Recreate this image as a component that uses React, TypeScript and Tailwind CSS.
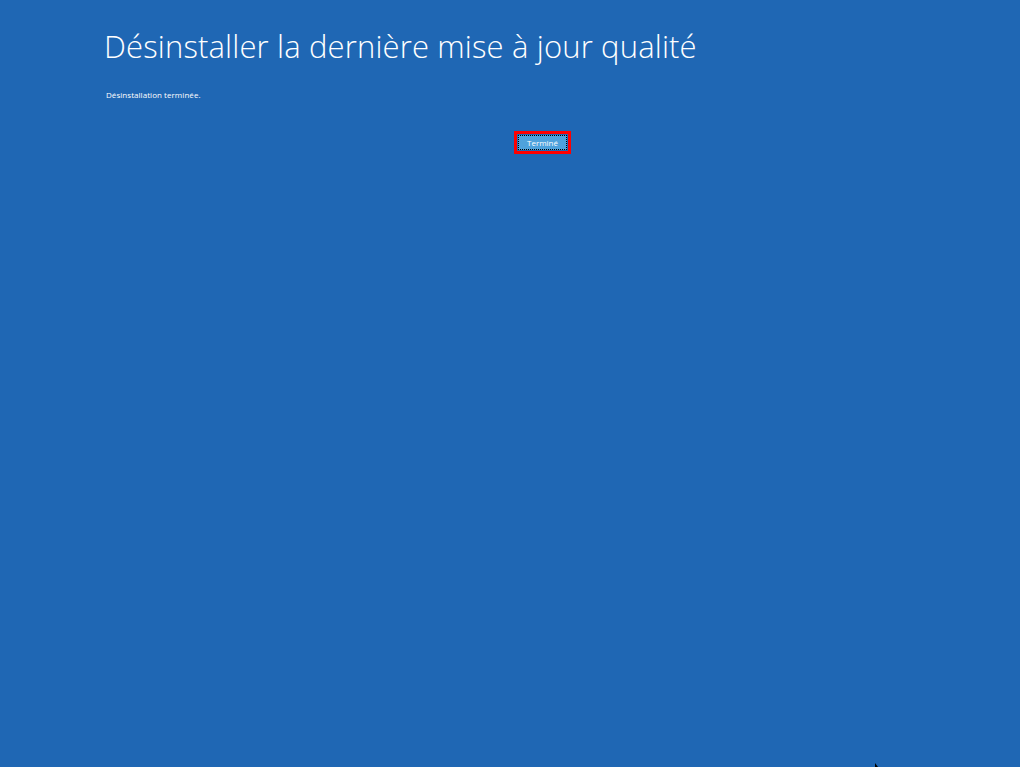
import React from "react";

export default function App() {
  return (
    <div className="w-[1020px] h-[767px] bg-[#1f67b4] overflow-hidden relative text-white" style={{ fontFamily: '"Open Sans", "Noto Sans", sans-serif' }}>
      <div className="pl-[104px] pt-[26px]">
        <h1 className="text-[31px] leading-[40px] font-light tracking-[0.15px]">Désinstaller la dernière mise à jour qualité</h1>
        <p className="mt-[23px] text-[8px] leading-[12px] pl-[2px] tracking-[0.05px]">Désinstallation terminée.</p>
      </div>
      <div className="flex justify-start pl-[514px] mt-[30px]">
        <div className="border-[3px] border-[#ff0000] w-[57px] h-[23px] p-[1px]">
          <div className="w-full h-full bg-[#4ea2dc] border border-dotted border-black flex items-center justify-center text-[8px] leading-none">Terminé</div>
        </div>
      </div>
      <div className="absolute left-[875px] top-[763px] w-0 h-0 border-l-[3px] border-l-black border-t-[4px] border-t-transparent"></div>
    </div>
  );
}
